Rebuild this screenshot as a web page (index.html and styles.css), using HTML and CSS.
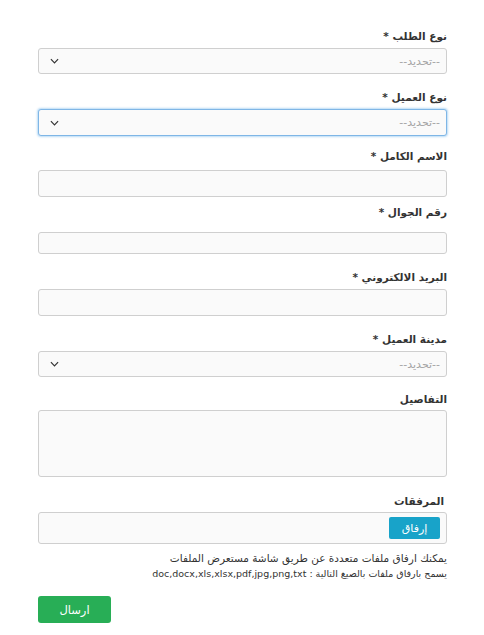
FILE: index.html
```html
<!DOCTYPE html>
<html lang="ar" dir="rtl">
<head>
<meta charset="utf-8">
<title>نموذج الطلب</title>
<link rel="stylesheet" href="styles.css">
</head>
<body>
<form class="form">
  <div class="group g1">
    <label class="lbl">نوع الطلب *</label>
    <div class="select"><span class="ph">--تحديد--</span><svg class="chev" viewBox="0 0 10 6" width="9" height="6"><path d="M1 1 L5 5 L9 1" fill="none" stroke="#333" stroke-width="1.3"/></svg></div>
  </div>
  <div class="group g2">
    <label class="lbl">نوع العميل *</label>
    <div class="select focus"><span class="ph">--تحديد--</span><svg class="chev" viewBox="0 0 10 6" width="9" height="6"><path d="M1 1 L5 5 L9 1" fill="none" stroke="#333" stroke-width="1.3"/></svg></div>
  </div>
  <div class="group g3">
    <label class="lbl">الاسم الكامل *</label>
    <div class="input"></div>
  </div>
  <div class="group g4">
    <label class="lbl">رقم الجوال *</label>
    <div class="input short"></div>
  </div>
  <div class="group g5">
    <label class="lbl">البريد الالكتروني *</label>
    <div class="input"></div>
  </div>
  <div class="group g6">
    <label class="lbl">مدينة العميل *</label>
    <div class="select"><span class="ph">--تحديد--</span><svg class="chev" viewBox="0 0 10 6" width="9" height="6"><path d="M1 1 L5 5 L9 1" fill="none" stroke="#333" stroke-width="1.3"/></svg></div>
  </div>
  <div class="group g7">
    <label class="lbl">التفاصيل</label>
    <div class="textarea"></div>
  </div>
  <div class="group g8">
    <label class="lbl att">المرفقات</label>
    <div class="filebox"><span class="attach">إرفاق</span></div>
  </div>
  <p class="help h1">يمكنك ارفاق ملفات متعددة عن طريق شاشة مستعرض الملفات</p>
  <p class="help h2">يسمح بارفاق ملفات بالصيغ التالية : doc,docx,xls,xlsx,pdf,jpg,png,txt</p>
  <div class="actions"><span class="submit">ارسال</span></div>
</form>
</body>
</html>
```
FILE: styles.css
```css
html, body {
  margin: 0;
  padding: 0;
  background: #fff;
}
body {
  font-family: "DejaVu Sans", "Noto Sans", sans-serif;
  color: #333;
}
.form {
  margin: 0 37px 0 38px;
  padding-top: 28px;
  display: flex;
  flex-direction: column;
}
.group {
  display: flex;
  flex-direction: column;
}
.lbl {
  display: block;
  font-size: 10.5px;
  font-weight: bold;
  line-height: 16px;
  height: 16px;
  color: #333;
}
.select, .input, .textarea, .filebox {
  box-sizing: border-box;
  background: #fafafa;
  border: 1px solid #cfcfcf;
  border-radius: 3px;
}
.select {
  height: 26px;
  display: flex;
  align-items: center;
  justify-content: space-between;
  padding: 0 6px 0 11px;
}
.select.focus {
  height: 27px;
  border-color: #7fb6e6;
  box-shadow: 0 0 2px 1px rgba(102,175,233,0.45);
}
.ph {
  font-size: 11px;
  color: #a4a4a4;
}
.chev { display: block; }
.input { height: 27px; }
.input.short { height: 22px; }
.textarea { height: 67px; }
.filebox {
  height: 32px;
  display: flex;
  align-items: center;
  padding: 0 6px;
}
.attach {
  background: #18a3c9;
  color: #fff;
  font-size: 11px;
  height: 22px;
  width: 51px;
  display: flex;
  align-items: center;
  justify-content: center;
  border-radius: 2px;
}
.g1 .lbl { margin-bottom: 4px; }
.g1 { margin-bottom: 15px; }
.g2 .lbl { margin-bottom: 4px; }
.g2 { margin-bottom: 12px; }
.g3 .lbl { margin-bottom: 6px; }
.g3 { margin-bottom: 7px; }
.g4 .lbl { margin-bottom: 12px; }
.g4 { margin-bottom: 15px; }
.g5 .lbl { margin-bottom: 4px; }
.g5 { margin-bottom: 15px; }
.g6 .lbl { margin-bottom: 4px; }
.g6 { margin-bottom: 14px; }
.g7 .lbl { margin-bottom: 3px; }
.g7 { margin-bottom: 16px; }
.g8 .lbl { margin-bottom: 3px; }
.att { padding-right: 3px; }
.help {
  margin: 0;
  font-size: 10.5px;
  line-height: 16px;
  color: #333;
}
.h1 { margin-top: 6px; }
.h2 { font-size: 9.5px; }
.actions {
  margin-top: 14px;
  display: flex;
  justify-content: flex-end;
}
.submit {
  background: #28ae56;
  color: #fff;
  font-size: 11.5px;
  width: 73px;
  height: 27px;
  display: flex;
  align-items: center;
  justify-content: center;
  border-radius: 3px;
}
```
